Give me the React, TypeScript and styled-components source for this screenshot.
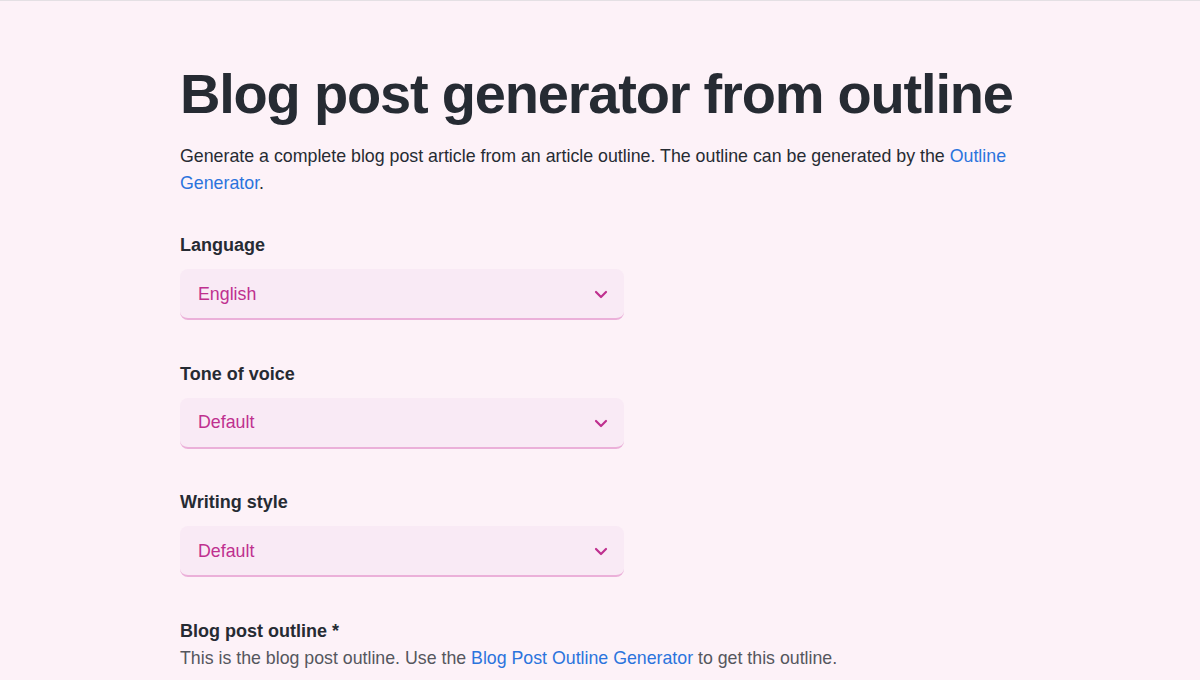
import React from "react";
import styled, { createGlobalStyle } from "styled-components";

const Global = createGlobalStyle`
  html, body { margin: 0; padding: 0; }
  body {
    background: #fdf2f8;
    font-family: "Liberation Sans", Arial, Helvetica, sans-serif;
    color: #262b33;
  }
`;

const Page = styled.div`
  height: 680px;
  overflow: hidden;
  border-top: 1px solid #e4e0e4;
  box-sizing: border-box;
`;

const Container = styled.main`
  max-width: 840px;
  margin: 0 auto;
  padding-top: 61px;
`;

const Title = styled.h1`
  margin: 0;
  font-size: 56px;
  line-height: 64px;
  font-weight: 700;
  color: #262b33;
  letter-spacing: -1.2px;
  white-space: nowrap;
`;

const Lead = styled.p`
  margin: 17px 0 0;
  font-size: 17.8px;
  line-height: 27px;
  color: #262b33;
`;

const Link = styled.a`
  color: #2b74dd;
  text-decoration: none;
`;

const Form = styled.div`
  margin-top: 36px;
  display: flex;
  flex-direction: column;
  gap: 41.5px;
`;

const Field = styled.div`
  display: flex;
  flex-direction: column;
`;

const Label = styled.label`
  font-size: 18px;
  line-height: 24px;
  font-weight: 700;
  color: #262b33;
`;

const Hint = styled.div`
  font-size: 17.75px;
  line-height: 26px;
  color: #55575e;
  margin-top: 2px;
`;

const Select = styled.div`
  margin-top: 12px;
  width: 444px;
  height: 51px;
  box-sizing: border-box;
  border-radius: 8px;
  background: #f9eaf5;
  border-bottom: 2px solid #ebb0d9;
  display: flex;
  align-items: center;
  justify-content: space-between;
  padding: 1px 16px 0 18px;
  color: #bf308f;
  font-size: 17.8px;
`;

const Chevron = () => (
  <svg width="14" height="10" viewBox="0 0 14 10" fill="none">
    <path d="M2 3l5 5 5-5" stroke="#bf308f" strokeWidth="2.2" strokeLinecap="round" strokeLinejoin="round" />
  </svg>
);

const fields = [
  { label: "Language", value: "English" },
  { label: "Tone of voice", value: "Default" },
  { label: "Writing style", value: "Default" },
];

export default function App() {
  return (
    <Page>
      <Global />
      <Container>
        <Title>Blog post generator from outline</Title>
        <Lead>
          Generate a complete blog post article from an article outline. The outline can be generated by the{" "}
          <Link href="#">Outline Generator</Link>.
        </Lead>
        <Form>
          {fields.map((f) => (
            <Field key={f.label}>
              <Label>{f.label}</Label>
              <Select>
                <span>{f.value}</span>
                <Chevron />
              </Select>
            </Field>
          ))}
          <Field>
            <Label>Blog post outline *</Label>
            <Hint>
              This is the blog post outline. Use the <Link href="#">Blog Post Outline Generator</Link> to get this outline.
            </Hint>
          </Field>
        </Form>
      </Container>
    </Page>
  );
}
